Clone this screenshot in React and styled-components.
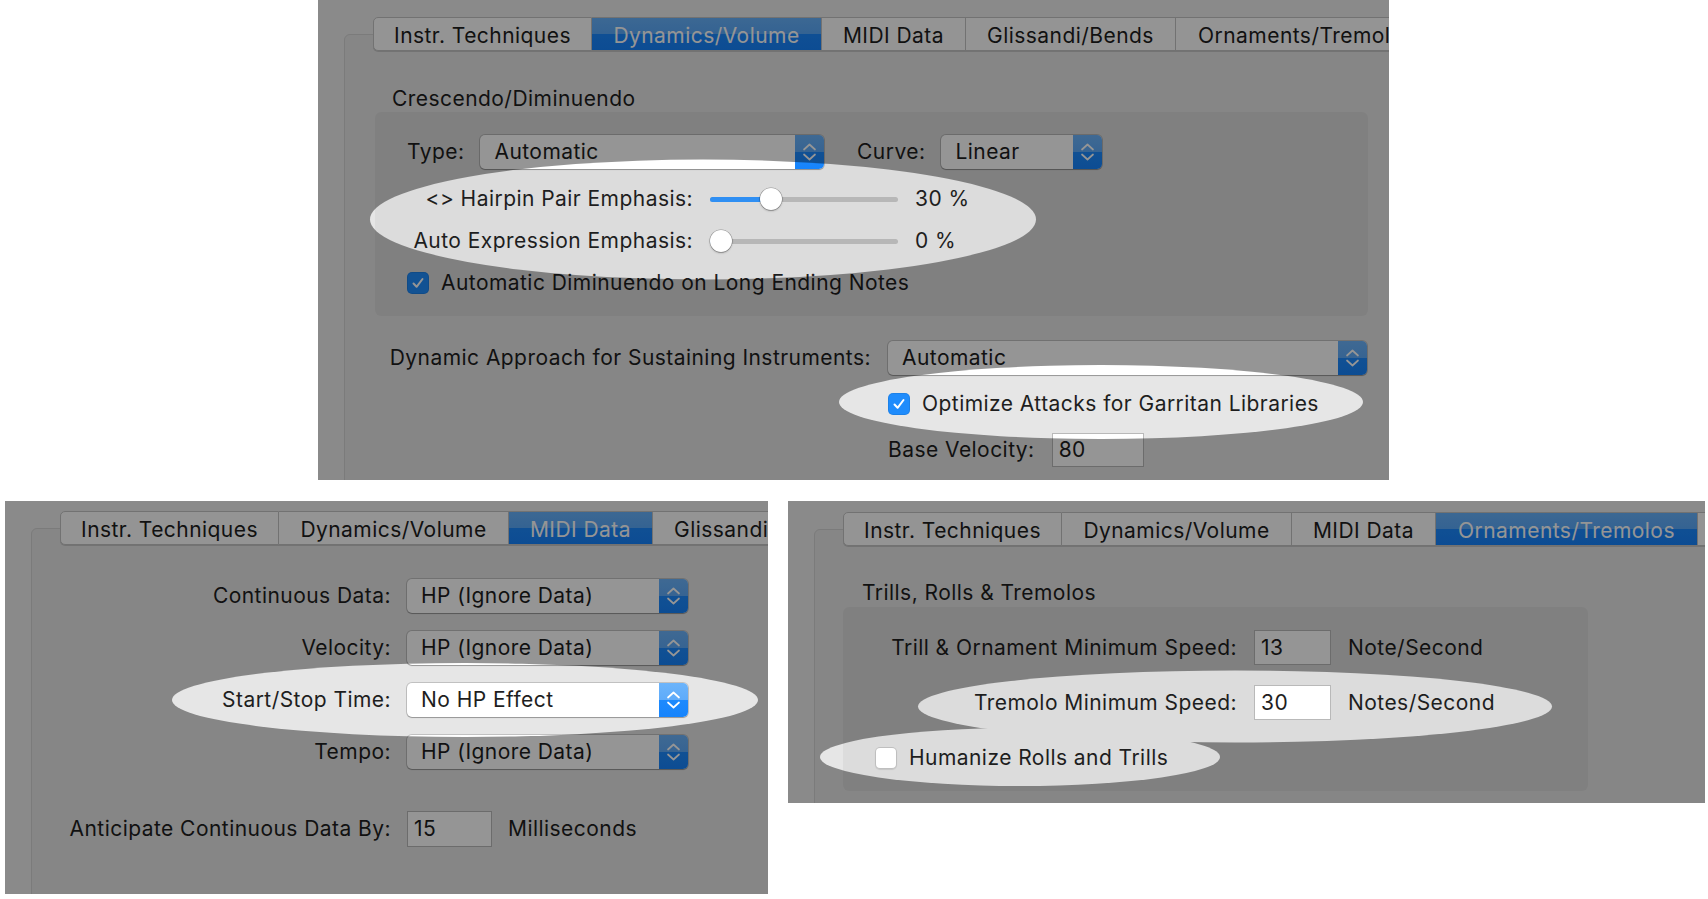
import React from 'react';
import styled, { createGlobalStyle } from 'styled-components';

const GlobalStyle = createGlobalStyle`
  html, body { margin: 0; padding: 0; background: #fff; }
  body { font-family: Inter, "Liberation Sans", Arial, sans-serif; }
`;

const Page = styled.div`
  width: 1708px;
  height: 899px;
  display: flex;
  flex-direction: column;
  overflow: hidden;
  background: #fff;
`;

const TopRow = styled.div`
  display: flex;
  padding-left: 318px;
`;

const BottomRow = styled.div`
  display: flex;
  align-items: flex-start;
  gap: 20px;
  margin-top: 21px;
  padding-left: 5px;
`;

const Window = styled.div`
  position: relative;
  overflow: hidden;
  flex: 0 0 auto;
  box-sizing: border-box;
  width: ${p => p.$w}px;
  height: ${p => p.$h}px;
  padding-top: ${p => p.$top}px;
  padding-left: 26px;
  background: #ececec;
  color: #1e1e1e;
  font-size: 21px;
  letter-spacing: 0.45px;
  line-height: 24px;
`;

const TabView = styled.div`
  display: flex;
  flex-direction: column;
  width: calc(100% + 60px);
`;

const TabStrip = styled.div`
  display: flex;
  margin-left: 29px;
  position: relative;
  z-index: 1;
`;

const Tab = styled.div`
  flex: 0 0 ${p => p.$w}px;
  height: 34px;
  box-sizing: border-box;
  padding-top: 3px;
  display: flex;
  align-items: center;
  justify-content: center;
  white-space: nowrap;
  border: 1px solid #c4c4c4;
  border-left: none;
  box-shadow: 0 1px 0 rgba(0, 0, 0, 0.14);
  color: ${p => (p.$active ? '#fff' : '#1e1e1e')};
  background: ${p =>
    p.$active
      ? 'linear-gradient(#67b2fb 0, #5aa9fa 50%, #1b88fd 50%, #1683fc 100%)'
      : '#fdfdfd'};
  &:first-child {
    border-left: 1px solid #c4c4c4;
    border-radius: 5px 0 0 5px;
  }
`;

const TabBox = styled.div`
  margin-top: -17px;
  min-height: 700px;
  box-sizing: border-box;
  padding-top: ${p => p.$pt}px;
  background: #e6e6e6;
  border: 1px solid #d2d2d2;
  border-radius: 6px;
  display: flex;
  flex-direction: column;
  align-items: flex-start;
`;

const SectionTitle = styled.div`
  margin-left: 47px;
  white-space: nowrap;
`;

const GroupBox = styled.div`
  margin-top: ${p => p.$mt}px;
  margin-left: ${p => p.$ml}px;
  width: ${p => p.$w}px;
  height: ${p => p.$h}px;
  box-sizing: border-box;
  padding: 23px 0 0 32px;
  background: #dcdcdc;
  border-radius: 6px;
  display: flex;
  flex-direction: column;
  gap: ${p => p.$gap}px;
`;

const Row = styled.div`
  display: flex;
  align-items: center;
  gap: ${p => p.$gap ?? 16}px;
  min-height: ${p => p.$h ?? 24}px;
  margin-left: ${p => p.$ml ?? 0}px;
  margin-top: ${p => p.$mt ?? 0}px;
  white-space: nowrap;
`;

const Label = styled.span`
  flex: 0 0 ${p => p.$w}px;
  text-align: right;
  white-space: nowrap;
`;

const FormGrid = styled.div`
  display: grid;
  grid-template-columns: ${p => p.$cols};
  column-gap: ${p => p.$gap}px;
  row-gap: ${p => p.$rowGap}px;
  align-items: center;
  margin-top: ${p => p.$mt}px;
  margin-left: ${p => p.$ml}px;
  white-space: nowrap;
`;

const PopupBox = styled.div`
  display: flex;
  align-items: center;
  width: ${p => p.$w}px;
  height: 34px;
  box-sizing: border-box;
  padding-left: 14px;
  background: #fff;
  border-radius: 5px;
  overflow: hidden;
  box-shadow: 0 0 0 1px rgba(0, 0, 0, 0.16), 0 1px 1px rgba(0, 0, 0, 0.22);
`;

const PopupText = styled.span`
  flex: 1;
  white-space: nowrap;
`;

const Stepper = styled.span`
  flex: 0 0 29px;
  align-self: stretch;
  display: flex;
  align-items: center;
  justify-content: center;
  background: linear-gradient(#6cb4fb 0, #5eabfa 50%, #1e8afd 50%, #1684fc 100%);
`;

const Field = styled.div`
  width: ${p => p.$w}px;
  height: ${p => p.$h ?? 34}px;
  box-sizing: border-box;
  padding-left: 6px;
  display: flex;
  align-items: center;
  background: #fff;
  border: 1px solid #b9b9b9;
`;

const Box = styled.span`
  flex: 0 0 22px;
  width: 22px;
  height: 22px;
  box-sizing: border-box;
  border-radius: 5px;
  display: flex;
  align-items: center;
  justify-content: center;
  background: ${p => (p.$checked ? '#1f8cfc' : '#fff')};
  box-shadow: ${p =>
    p.$checked ? 'inset 0 0 0 1px rgba(0,0,0,0.08)' : 'inset 0 0 0 1px rgba(0,0,0,0.25), 0 1px 1px rgba(0,0,0,0.1)'};
`;

const Track = styled.div`
  position: relative;
  flex: 0 0 188px;
  height: 24px;
  display: flex;
  align-items: center;
`;

const TrackLine = styled.div`
  width: 100%;
  height: 5px;
  border-radius: 3px;
  background: #b7b7b7;
  overflow: hidden;
`;

const TrackFill = styled.div`
  height: 100%;
  background: #2f8ff3;
`;

const Knob = styled.div`
  position: absolute;
  top: 1px;
  width: 22px;
  height: 22px;
  border-radius: 50%;
  background: #fff;
  box-shadow: 0 0 0 0.5px rgba(0, 0, 0, 0.3), 0 1px 2px rgba(0, 0, 0, 0.3);
`;

const Dim = styled.svg`
  position: absolute;
  left: 0;
  top: 0;
  z-index: 5;
  pointer-events: none;
`;

const Chevrons = () => (
  <svg width="15" height="22" viewBox="0 0 15 22">
    <path d="M2 8.5 L7.5 3.5 L13 8.5 M2 13.5 L7.5 18.5 L13 13.5" fill="none" stroke="#fff" strokeWidth="1.7" strokeLinecap="round" strokeLinejoin="round" />
  </svg>
);

const Popup = ({ w, children }) => (
  <PopupBox $w={w}>
    <PopupText>{children}</PopupText>
    <Stepper><Chevrons /></Stepper>
  </PopupBox>
);

const Check = ({ checked }) => (
  <Box $checked={checked}>
    {checked && (
      <svg width="16" height="16" viewBox="0 0 16 16">
        <path d="M3.5 8.5 L6.6 11.8 L12.5 4" fill="none" stroke="#fff" strokeWidth="2" strokeLinecap="round" strokeLinejoin="round" />
      </svg>
    )}
  </Box>
);

const Slider = ({ value }) => {
  const x = 11 + (value / 100) * (188 - 22);
  return (
    <Track>
      <TrackLine>
        <TrackFill style={{ width: x }} />
      </TrackLine>
      <Knob style={{ left: x - 11 }} />
    </Track>
  );
};

const Spotlight = ({ id, w, h, holes }) => (
  <Dim width={w} height={h} viewBox={`0 0 ${w} ${h}`}>
    <defs>
      <mask id={id}>
        <rect width={w} height={h} fill="#fff" />
        {holes.map(([cx, cy, rx, ry], i) => (
          <ellipse key={i} cx={cx} cy={cy} rx={rx} ry={ry} fill="#000" />
        ))}
      </mask>
    </defs>
    <rect width={w} height={h} fill="#000" fillOpacity="0.415" mask={`url(#${id})`} />
  </Dim>
);

const TABS = [
  ['Instr. Techniques', 219],
  ['Dynamics/Volume', 230],
  ['MIDI Data', 144],
];

const Tabs = ({ items, active }) => (
  <TabStrip>
    {items.map(([name, w]) => (
      <Tab key={name + w} $w={w} $active={name === active}>{name}</Tab>
    ))}
  </TabStrip>
);

const DynamicsPanel = () => (
  <Window $w={1071} $h={480} $top={17}>
    <TabView>
      <Tabs items={[...TABS, ['Glissandi/Bends', 210], ['Ornaments/Tremolos', 262]]} active="Dynamics/Volume" />
      <TabBox $pt={52}>
        <SectionTitle>Crescendo/Diminuendo</SectionTitle>
        <GroupBox $mt={1} $ml={30} $w={993} $h={204} $gap={18}>
          <Row $h={34}>
            <Label $w={57}>Type:</Label>
            <Popup w={344}>Automatic</Popup>
            <Label $w={85}>Curve:</Label>
            <Popup w={161}>Linear</Popup>
          </Row>
          <Row $gap={17}>
            <Label $w={286}>&lt;&gt; Hairpin Pair Emphasis:</Label>
            <Slider value={30} />
            <span>30 %</span>
          </Row>
          <Row $gap={17}>
            <Label $w={286}>Auto Expression Emphasis:</Label>
            <Slider value={0} />
            <span>0 %</span>
          </Row>
          <Row $gap={12}>
            <Check checked />
            <span>Automatic Diminuendo on Long Ending Notes</span>
          </Row>
        </GroupBox>
        <FormGrid $cols="487px 480px" $gap={17} $rowGap={17} $mt={25} $ml={39}>
          <Label>Dynamic Approach for Sustaining Instruments:</Label>
          <Popup w={479}>Automatic</Popup>
          <span />
          <Row $gap={12}>
            <Check checked />
            <span>Optimize Attacks for Garritan Libraries</span>
          </Row>
          <span />
          <Row $gap={17}>
            <span>Base Velocity:</span>
            <Field $w={92}>80</Field>
          </Row>
        </FormGrid>
      </TabBox>
    </TabView>
    <Spotlight id="spot-dyn" w={1071} h={480} holes={[[385, 219.5, 333, 60], [783, 402, 262, 37]]} />
  </Window>
);

const MidiPanel = () => (
  <Window $w={763} $h={393} $top={10}>
    <TabView>
      <Tabs items={[...TABS, ['Glissandi/Bends', 210]]} active="MIDI Data" />
      <TabBox $pt={50}>
        <FormGrid $cols="359px 281px" $gap={16} $rowGap={18} $mt={0} $ml={0}>
          <Label>Continuous Data:</Label>
          <Popup w={281}>HP (Ignore Data)</Popup>
          <Label>Velocity:</Label>
          <Popup w={281}>HP (Ignore Data)</Popup>
          <Label>Start/Stop Time:</Label>
          <Popup w={281}>No HP Effect</Popup>
          <Label>Tempo:</Label>
          <Popup w={281}>HP (Ignore Data)</Popup>
        </FormGrid>
        <Row $h={36} $mt={42}>
          <Label $w={359}>Anticipate Continuous Data By:</Label>
          <Field $w={85} $h={36}>15</Field>
          <span>Milliseconds</span>
        </Row>
      </TabBox>
    </TabView>
    <Spotlight id="spot-midi" w={763} h={393} holes={[[460, 199, 293, 37]]} />
  </Window>
);

const OrnamentsPanel = () => (
  <Window $w={917} $h={302} $top={11}>
    <TabView>
      <Tabs items={[...TABS, ['Ornaments/Tremolos', 262], ['', 120]]} active="Ornaments/Tremolos" />
      <TabBox $pt={51}>
        <SectionTitle>Trills, Rolls &amp; Tremolos</SectionTitle>
        <GroupBox $mt={2} $ml={28} $w={745} $h={184} $gap={20}>
          <Row $h={35} $gap={17}>
            <Label $w={362}>Trill &amp; Ornament Minimum Speed:</Label>
            <Field $w={77} $h={35}>13</Field>
            <span>Note/Second</span>
          </Row>
          <Row $h={35} $gap={17}>
            <Label $w={362}>Tremolo Minimum Speed:</Label>
            <Field $w={77} $h={35}>30</Field>
            <span>Notes/Second</span>
          </Row>
          <Row $h={35} $gap={12}>
            <Check />
            <span>Humanize Rolls and Trills</span>
          </Row>
        </GroupBox>
      </TabBox>
    </TabView>
    <Spotlight id="spot-orn" w={917} h={302} holes={[[447, 205.5, 317, 36], [232, 256, 200, 29]]} />
  </Window>
);

export default function App() {
  return (
    <Page>
      <GlobalStyle />
      <TopRow>
        <DynamicsPanel />
      </TopRow>
      <BottomRow>
        <MidiPanel />
        <OrnamentsPanel />
      </BottomRow>
    </Page>
  );
}
